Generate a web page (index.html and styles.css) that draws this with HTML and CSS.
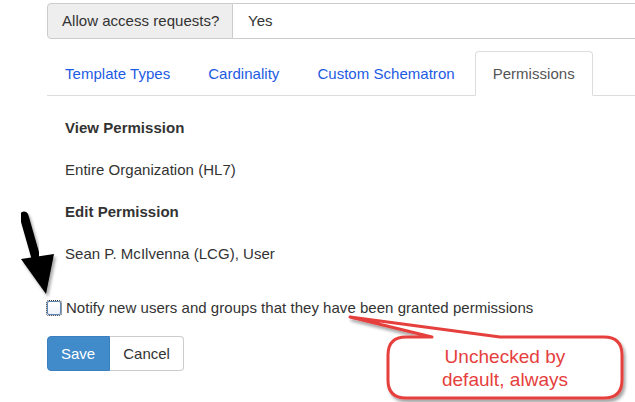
FILE: index.html
```html
<!DOCTYPE html>
<html>
<head>
<meta charset="utf-8">
<link rel="stylesheet" href="styles.css">
</head>
<body>
<div class="page">
  <div class="input-group">
    <span class="addon">Allow access requests?</span>
    <span class="value">Yes</span>
  </div>
  <ul class="tabs">
    <li><a class="tab">Template Types</a></li>
    <li><a class="tab">Cardinality</a></li>
    <li><a class="tab">Custom Schematron</a></li>
    <li><a class="tab active">Permissions</a></li>
  </ul>
  <div class="content">
    <div class="line heading">View Permission</div>
    <div class="line">Entire Organization (HL7)</div>
    <div class="line heading">Edit Permission</div>
    <div class="line">Sean P. McIlvenna (LCG), User</div>
  </div>
  <label class="check-row"><input type="checkbox" class="check"><span>Notify new users and groups that they have been granted permissions</span></label>
  <div class="btn-group">
    <button class="btn primary">Save</button>
    <button class="btn default">Cancel</button>
  </div>
</div>
<div class="overlay">
  <svg class="annot" width="635" height="402" viewBox="0 0 635 402">
    <defs>
      <filter id="sh" x="-20%" y="-20%" width="140%" height="150%">
        <feDropShadow dx="2" dy="3" stdDeviation="1.5" flood-color="#000" flood-opacity="0.35"/>
      </filter>
    </defs>
    <path d="M24 216 L36 258" stroke="#000" stroke-width="9" stroke-linecap="round" fill="none" filter="url(#sh)"/>
    <path d="M21 259 L54 254 L46 294 Z" fill="#000" filter="url(#sh)"/>
    <path d="M432 337 L350 317 L500 337 L604 337 Q622 337 622 355 L622 380 Q622 398 604 398 L406 398 Q388 398 388 380 L388 355 Q388 337 406 337 Z" fill="#fff" stroke="#e5403d" stroke-width="3" stroke-linejoin="round" filter="url(#sh)"/>
  </svg>
  <div class="callout-text">Unchecked by<br>default, always</div>
</div>
</body>
</html>
```
FILE: styles.css
```css
html, body {
  margin: 0;
  padding: 0;
  overflow: hidden;
  width: 635px;
  height: 402px;
  background: #fff;
}
body {
  position: relative;
  font-family: "Liberation Sans", Arial, sans-serif;
  font-size: 15px;
  letter-spacing: 0.03px;
  color: #333;
}
.page {
  padding-top: 3px;
}
.input-group {
  display: flex;
  margin-left: 47px;
  margin-right: -20px;
  height: 36px;
}
.addon {
  box-sizing: border-box;
  width: 186px;
  padding: 0 14px;
  line-height: 34px;
  background: #eee;
  border: 1px solid #ccc;
  border-radius: 4px 0 0 4px;
  white-space: nowrap;
}
.value {
  flex: 1;
  box-sizing: border-box;
  padding: 0 15px;
  line-height: 34px;
  border: 1px solid #ccc;
  border-left: 0;
}
.tabs {
  display: flex;
  list-style: none;
  margin: 12px 0 0 47px;
  padding: 0;
  border-bottom: 1px solid #ddd;
}
.tabs li {
  margin-right: 2px;
  margin-bottom: -1px;
}
.tab {
  display: block;
  padding: 11px 17px;
  line-height: 21px;
  border: 1px solid transparent;
  border-radius: 4px 4px 0 0;
  color: #1d5be3;
  white-space: nowrap;
}
.tab.active {
  color: #555;
  background: #fff;
  border-color: #ddd;
  border-bottom-color: #fff;
}
.content {
  padding: 21px 0 0 65px;
}
.line {
  line-height: 21px;
  margin-bottom: 21px;
}
.heading {
  font-weight: bold;
}
.check-row {
  display: flex;
  align-items: center;
  margin: 33px 0 0 47px;
  line-height: 21px;
  gap: 5px;
}
.check {
  -webkit-appearance: none;
  appearance: none;
  box-sizing: border-box;
  width: 14px;
  height: 14px;
  margin: 0;
  border: 1px solid #5c85b8;
  border-radius: 2px;
  outline: 1px dotted #333;
  outline-offset: 0;
  background: linear-gradient(#fff, #eef3fa);
}
.btn-group {
  display: flex;
  margin: 18px 0 0 47px;
}
.btn {
  font-family: "Liberation Sans", Arial, sans-serif;
  font-size: 15px;
  line-height: 21px;
  padding: 6px 14px;
  margin: 0;
  border: 1px solid #ccc;
  cursor: pointer;
}
.primary {
  background: #428bca;
  border-color: #3b7fbf;
  color: #fff;
  border-radius: 4px 0 0 4px;
  padding: 6px 14px 6px 13px;
}
.default {
  background: #fff;
  color: #333;
  border-left: 0;
  border-radius: 0 4px 4px 0;
  padding: 6px 13px;
}
.overlay {
  position: absolute;
  left: 0;
  top: 0;
  width: 635px;
  height: 402px;
  pointer-events: none;
}
.annot {
  position: absolute;
  left: 0;
  top: 0;
}
.callout-text {
  position: absolute;
  left: 388px;
  top: 338px;
  width: 234px;
  height: 60px;
  display: flex;
  align-items: center;
  justify-content: center;
  text-align: center;
  font-size: 19px;
  line-height: 23px;
  color: #e5403d;
}
```
